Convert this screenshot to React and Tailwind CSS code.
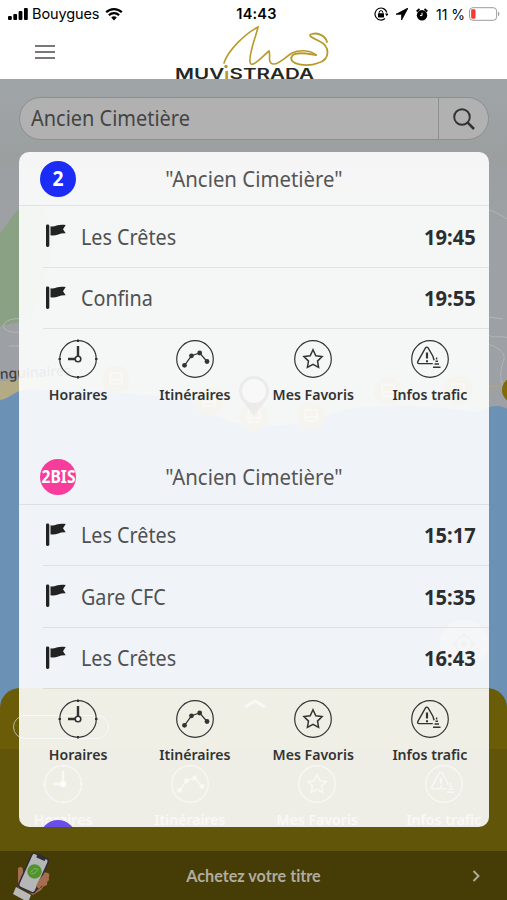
import React from 'react';
import clsx from 'clsx';

const lines = [
  {
    id: '2',
    color: 'bg-[#1a2cf5]',
    labelClass: 'text-[21px]',
    stop: 'Ancien Cimetière',
    departures: [
      { to: 'Les Crêtes', time: '19:45' },
      { to: 'Confina', time: '19:55' },
    ],
  },
  {
    id: '2BIS',
    color: 'bg-[#f73c9b]',
    labelClass: 'text-[17px]',
    stop: 'Ancien Cimetière',
    departures: [
      { to: 'Les Crêtes', time: '15:17' },
      { to: 'Gare CFC', time: '15:35' },
      { to: 'Les Crêtes', time: '16:43' },
    ],
  },
];

const ClockIcon = () => (
  <>
    <path d="M20 7v13h-10" strokeWidth="2.400" />
    <circle cx="20" cy="20" r="2.800" fill="white" strokeWidth="1.600" />
    <path d="M20 .5v2.500M20 37v2.500M.5 20h2.500M37 20h2.500" strokeWidth="2" />
  </>
);

const RouteIcon = () => (
  <>
    <path d="M9.500 26.300L16.500 16.800L24.700 14L32 22.500" />
    <g fill="currentColor" stroke="none">
      <circle cx="9.500" cy="26.300" r="2.400" />
      <circle cx="16.500" cy="16.800" r="2.400" />
      <circle cx="24.700" cy="14" r="2.400" />
      <circle cx="32" cy="22.500" r="2.400" />
    </g>
  </>
);

const StarIcon = () => (
  <path
    d="M20 10.800l2.800 5.900 6.300.9-4.600 4.500 1.100 6.300-5.600-3-5.600 3 1.100-6.300-4.600-4.500 6.300-.9z"
    strokeWidth="1.500"
  />
);

const TrafficIcon = () => (
  <>
    <path d="M22.800 24.600H9.200c-1.600 0-2-1-1.300-2.200L15.500 8.900c.6-1 2-1 2.600 0l4.800 8.300 1.200 4" strokeWidth="1.400" />
    <path d="M17 13.500v6" strokeWidth="2.200" />
    <path d="M17 21.300v2" strokeWidth="2" />
    <path d="M26.600 18.500v2M25.500 22.300h2.500M24.500 25h4.500M23 28.300h7.500" strokeWidth="1.400" />
  </>
);

const actions = [
  { label: 'Horaires', icon: ClockIcon },
  { label: 'Itinéraires', icon: RouteIcon },
  { label: 'Mes Favoris', icon: StarIcon },
  { label: 'Infos trafic', icon: TrafficIcon },
];

// Round outlined icon used for every line action
const RoundIcon = ({ icon: Icon }) => (
  <svg viewBox="0 0 40 40" className="size-10" fill="none" stroke="currentColor" strokeWidth="1.200">
    <circle cx="20" cy="20" r="18.300" />
    <Icon />
  </svg>
);

// iOS status bar
const StatusBar = () => (
  <div className="flex h-7 items-center font-['Inter'] text-[14.500px] text-black">
    <div className="flex flex-1 items-center gap-1 pl-2">
      <svg className="h-3 w-5" viewBox="0 0 20 12">
        <rect x="0" y="8" width="3.800" height="4" rx="1" />
        <rect x="5.300" y="6" width="3.800" height="6" rx="1" />
        <rect x="10.600" y="3" width="3.800" height="9" rx="1" />
        <rect x="16" y="0" width="3.800" height="12" rx="1" />
      </svg>
      <span className="tracking-[-0.100px]">Bouygues</span>
      <svg className="ml-0.5 h-3.5 w-[18px]" viewBox="0 0 18 14" fill="none" stroke="black" strokeWidth="2.300">
        <path d="M1.200 5.300a11 11 0 0 1 15.600 0M3.900 8.200a7.200 7.200 0 0 1 10.200 0" />
        <path d="M9 13.500L6.200 10.600a4 4 0 0 1 5.600 0z" fill="black" stroke="none" />
      </svg>
    </div>
    <span className="relative left-0.5 font-semibold tracking-[0.200px]">14:43</span>
    <div className="flex flex-1 items-center justify-end pr-1.5">
      <svg className="size-3.5" viewBox="0 0 14 14" fill="none" stroke="black">
        <path d="M12.800 5.500A6 6 0 1 0 11 11.500" strokeWidth="1.200" />
        <path d="M11 6.500h3.400l-1.600 2.800z" fill="black" stroke="none" />
        <rect x="4" y="6.200" width="6" height="4.200" rx=".6" fill="black" stroke="none" />
        <path d="M5.200 6.500V5.400a1.800 1.800 0 0 1 3.600 0v1.100" />
      </svg>
      <svg className="ml-2 size-3" viewBox="0 0 12 12">
        <path d="M12 0L0 6.300h5.600V12z" stroke="black" strokeWidth=".8" strokeLinejoin="round" />
      </svg>
      <svg className="ml-2 h-[13px] w-3" viewBox="0 0 12 13" fill="none" stroke="black">
        <circle cx="6" cy="7.300" r="5.200" fill="black" stroke="none" />
        <path d="M.7 3.500L3.500 1M11.300 3.500L8.500 1" strokeWidth="1.800" />
        <path d="M6 4.700v2.900H4" stroke="white" />
      </svg>
      <span className="ml-2 text-[14px]">11 %</span>
      <svg className="ml-1 h-3.5 w-[32px]" viewBox="0 0 33 14">
        <rect x=".5" y=".5" width="28" height="13" rx="3.500" fill="white" stroke="#999" />
        <rect x="2.200" y="2.200" width="4.500" height="9.600" rx="1.200" fill="#f9382f" />
        <path d="M30 4.800c1.800.4 1.800 4 0 4.400z" fill="#999" />
      </svg>
    </div>
  </div>
);

const Logo = () => (
  <svg
    className="absolute left-[170px] top-5 h-[59px] w-[165px] overflow-visible"
    viewBox="0 0 165 59"
    fill="none"
    stroke="#b8992b"
    strokeLinecap="round"
  >
    <path
      d="M54 43C58 30 76 13 88 7C86 17 79 32 80 42C81 50 95 34 99 31C101 35 97 43 103 44C109 45 115 37 122 33C131 29 142 31 146 35"
      strokeWidth="1.600"
    />
    <path
      d="M146 35C139 34 126 31 122 36C117 45 138 47 148 43C161 39 160 26 149 21C140 17 138 15 142 14C149 12 156 17 157 22"
      strokeWidth="1.800"
    />
    <text
      x="5"
      y="58.500"
      fill="#242822"
      stroke="none"
      textLength="139"
      lengthAdjust="spacingAndGlyphs"
      className="font-['Inter'] text-[14px] font-semibold"
    >
      MUV<tspan fill="#b8992b">ı</tspan>STRADA
    </text>
    <circle cx="56" cy="46.500" r="1.700" fill="#b8992b" stroke="none" />
  </svg>
);

const Header = () => (
  <header className="relative h-[79px] bg-white">
    <StatusBar />
    <svg className="ml-[35px] mt-[17px] h-3.5 w-5" viewBox="0 0 20 14" stroke="#504b4b" strokeWidth="1.700">
      <path d="M0 1h20M0 7h20M0 13h20" />
    </svg>
    <Logo />
  </header>
);

const BusStop = ({ x, y }) => (
  <g transform={`translate(${x} ${y})`}>
    <circle r="14" fill="#a09558" />
    <rect x="-6" y="-6" width="12" height="11" rx="2" fill="none" stroke="#b9b9a8" strokeWidth="2" />
    <path d="M-6 1h12" stroke="#b9b9a8" strokeWidth="2" />
  </g>
);

const MapBackground = () => (
  <svg className="absolute left-0 top-[79px] h-[821px] w-[507px]" viewBox="0 79 507 821" fill="none">
    <defs>
      <linearGradient id="haze" x1="0" y1="79" x2="0" y2="230" gradientUnits="userSpaceOnUse">
        <stop stopColor="#a0a5a7" />
        <stop offset=".5" stopColor="#9b9fa0" />
        <stop offset="1" stopColor="#9da1a5" />
      </linearGradient>
    </defs>
    <rect y="79" width="507" height="821" fill="url(#haze)" />
    <path d="M0 233C9 224 12 213 22 207C60 190 60 260 30 320L0 326z" fill="#8aa283" />
    <path d="M0 381C12 381 18 380 40 375V400L0 402z" fill="#b3ab86" />
    <path
      d="M0 400C8 399 13 393 22 390C80 388 120 392 190 400C230 430 260 430 320 420C350 400 420 405 480 412C488 405 500 404 507 409V900H0z"
      fill="#6b91b5"
    />
    <g stroke="#b3b5b5">
      <path d="M3 327C5 319 13 318 25 319M3 327C9 334 16 332 25 332M9 346h14M488 210C495 211 500 215 507 219M488 317l15 2" />
      <path d="M488 335C495 339 504 335 507 338M488 344C500 348 507 354 503 362C500 372 499 382 506 390" />
    </g>
    <path d="M488 386h19" stroke="#b1a47d" strokeWidth="1.500" />
    <text
      x="0"
      y="379"
      fill="#3e3e40"
      transform="rotate(-3 0 379)"
      className="font-['Noto_Sans'] text-[14px] font-medium"
    >
      nguinaires
    </text>
    <BusStop x={116} y={379} />
    <BusStop x={209} y={401} />
    <BusStop x={254} y={417} />
    <BusStop x={311} y={416} />
    <BusStop x={388} y={391} />
    <BusStop x={458} y={390} />
    <circle cx="515" cy="390" r="13" fill="#806b06" />
    <path d="M239 391a15 15 0 0 1 30 0c0 9-8 14-15 25c-7-11-15-16-15-25z" fill="#333" />
    <circle cx="254" cy="391" r="12" fill="#b8b8b8" />
    <circle cx="464" cy="644" r="24" fill="#9aa6b0" />
    <circle cx="464" cy="644" r="8" stroke="#777" strokeWidth="2" />
    <circle cx="464" cy="644" r="3" fill="#777" />
    <path d="M464 633v4M464 651v4M453 644h4M471 644h4" stroke="#777" strokeWidth="2" />
  </svg>
);

const SearchBar = () => (
  <div className="relative ml-[19px] mr-[18px] mt-[18px] flex h-[43px] rounded-full border border-[#8b8f90] bg-[#b1b1b1]">
    <div className="flex flex-1 items-center pl-[11px] text-[21px] text-[#444]">
      <span className="origin-left scale-x-95 whitespace-nowrap">Ancien Cimetière</span>
    </div>
    <div className="flex w-[50px] items-center justify-center border-l border-[#8b8f90]">
      <svg className="size-6" viewBox="0 0 24 24" fill="none" stroke="#303233" strokeWidth="1.900">
        <circle cx="10" cy="10" r="7.800" />
        <path d="M15.700 15.700L22 22" strokeWidth="2.500" />
      </svg>
    </div>
  </div>
);

const FlagIcon = () => (
  <svg className="h-6 w-5 text-[#222]" viewBox="0 0 20 24" fill="currentColor">
    <rect x="0" y="0.500" width="3.300" height="22.500" rx="1.400" />
    <path d="M4.500 2.300C9 3.300 12-.3 19.700 1.100L17 5.300L19.700 9.300C13 8.800 10 12.700 4.500 11.300z" />
  </svg>
);

const LineBadge = ({ line }) => (
  <div
    className={clsx(
      'flex size-9 shrink-0 items-center justify-center rounded-full font-bold text-white',
      line.color,
      line.labelClass,
    )}
  >
    <span className="scale-x-92">{line.id}</span>
  </div>
);

const ActionBar = () => (
  <div className="grid h-[121.500px] grid-cols-4 pt-[9.500px] text-[#333]">
    {actions.map(({ label, icon }) => (
      <div key={label} className="flex flex-col items-center">
        <RoundIcon icon={icon} />
        <span className="mt-1 scale-x-94 whitespace-nowrap text-[15px] font-semibold leading-[22px]">{label}</span>
      </div>
    ))}
  </div>
);

const LineSection = ({ line }) => (
  <section>
    <div className="flex h-[54px] items-center border-b border-black/8 px-[21px]">
      <LineBadge line={line} />
      <h2 className="mr-9 flex-1 scale-x-97 pt-0.5 text-center text-[21px] text-[#555]">"{line.stop}"</h2>
    </div>
    {line.departures.map(({ to, time }) => (
      <div key={time} className="ml-6 flex h-[61.500px] items-center border-b border-black/8 pl-[3px] pr-[13px]">
        <FlagIcon />
        <span className="ml-[14.500px] flex-1 origin-left scale-x-94 pt-0.5 text-[21px] text-[#505050]">{to}</span>
        <span className="origin-right scale-x-98 pt-0.5 text-[20.500px] font-bold text-[#2c2d2e]">{time}</span>
      </div>
    ))}
    <ActionBar />
  </section>
);

// Olive bottom sheet that sits under the schedule card
const BottomSheet = () => (
  <div className="absolute inset-x-0 top-[688px] h-[212px] overflow-hidden rounded-t-[20px] bg-[#6b5d08] text-[#b5b5b0]">
    <div className="flex h-[61px] items-center pl-[13px]">
      <div className="mt-4 h-6 w-24 rounded-full border border-[#b5b5b0]" />
      <svg className="mb-8 ml-[134px] h-3 w-6" viewBox="0 0 24 12" fill="none" stroke="currentColor" strokeWidth="3">
        <path d="M2 10l10-6 10 6" />
      </svg>
    </div>
    <div className="grid h-[151px] grid-cols-4 bg-[#61550a] pt-[15px]">
      {actions.map(({ label, icon }) => (
        <div key={label} className="flex flex-col items-center">
          <RoundIcon icon={icon} />
          <span className="mt-1 scale-x-94 text-[15px] font-semibold">{label}</span>
        </div>
      ))}
    </div>
  </div>
);

// Hand holding a phone with a validated ticket
const PhoneIcon = () => (
  <svg className="absolute left-3 top-0 h-[49px] w-10" viewBox="0 0 40 49">
    <path d="M6 17c3-2 5-1 5 3v13l-5 4z" fill="#a66e51" />
    <path d="M7 33l14 9 9-6 1-15 5 1c2 1 1 4 0 4 2 1 1 4-1 5 1 3-1 4-3 4l-3 4-8 5z" fill="#a66e51" />
    <path d="M4 36l15 8-2 5h-5l-11-6z" fill="#b9b9b9" />
    <rect x="12.500" y="3.500" width="18" height="37" rx="3" transform="rotate(24 21.500 22)" fill="#b4b6b8" stroke="#302b39" strokeWidth="1.500" />
    <path d="M25 3.500l9 4-1.500 2.500-8-3.500z" fill="#302b39" />
    <path d="M27 29l4-5 6-1c1 3-1 4-3 5 1 3-1 4-3 5l-4 5-3-3z" fill="#a66e51" />
    <circle cx="22.500" cy="20.500" r="7.200" fill="#51932c" />
    <path d="M18.500 22c2 2 5 0 7.500-3.500-3-2-5-.5-7 2.500" fill="none" stroke="#8fae7a" />
  </svg>
);

const BuyBar = () => (
  <footer className="absolute inset-x-0 bottom-0 flex h-[49px] items-center justify-center bg-[#463c06] pt-px font-['Lato',sans-serif] text-[16.200px] font-bold text-[#b0aca0] [font-variant-ligatures:none]">
    <PhoneIcon />
    Achetez votre titre
    <svg className="absolute right-[27px] h-3 w-2" viewBox="0 0 8 12" fill="none" stroke="currentColor" strokeWidth="1.900">
      <path d="M1.500 1l5 5-5 5" />
    </svg>
  </footer>
);

export default function App() {
  return (
    <div className="relative h-[900px] w-[507px] overflow-hidden bg-[#9da1a5] font-['Noto_Sans',sans-serif]">
      <MapBackground />
      <BottomSheet />
      <BuyBar />
      <Header />
      <SearchBar />
      <main className="relative ml-[19px] mr-[18px] mt-3 h-[674.500px] overflow-hidden rounded-[10px] bg-white/90">
        {lines.map((line) => (
          <LineSection key={line.id} line={line} />
        ))}
        <div className="ml-[21px] mt-[9px] size-9 rounded-full bg-[#6b4eea]" />
      </main>
    </div>
  );
}
